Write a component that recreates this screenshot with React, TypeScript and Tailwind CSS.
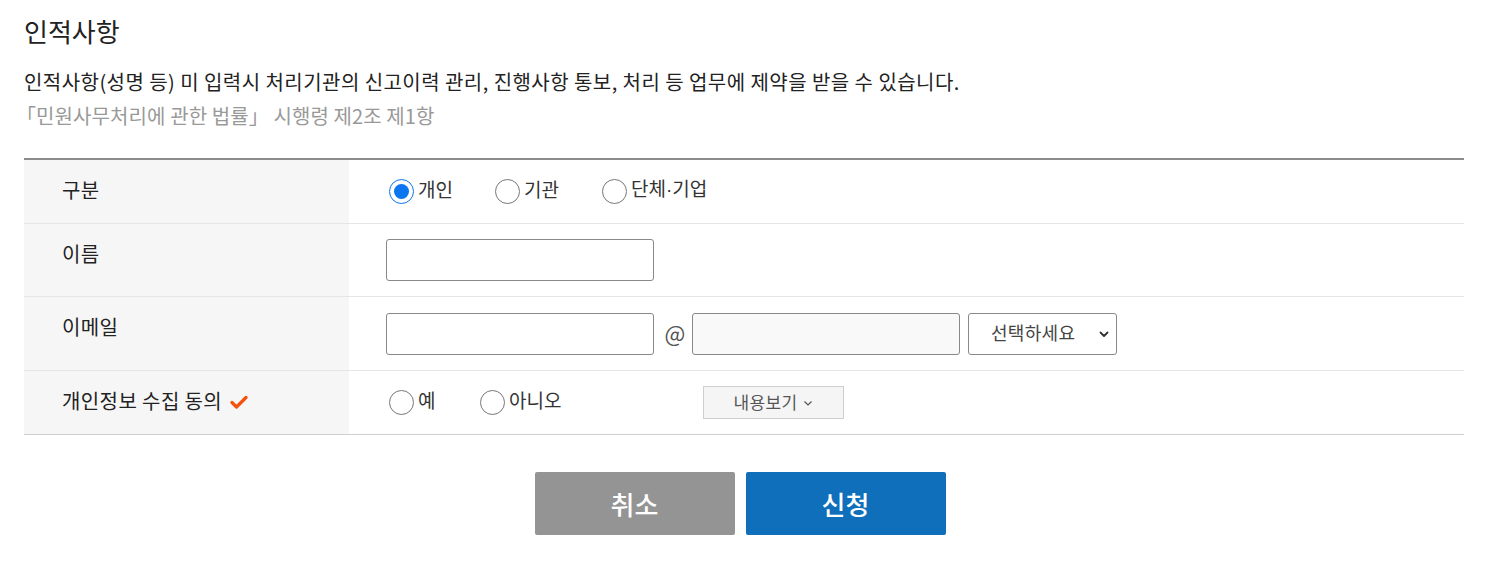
const FONT = { fontFamily: '"Noto Sans CJK KR", "Noto Sans", sans-serif' };

function Radio({ checked, label }: { checked?: boolean; label: React.ReactNode }) {
  return (
    <label className="flex items-center gap-[4px] text-[19px] text-[#333]">
      {checked ? (
        <span className="flex h-[25px] w-[25px] items-center justify-center rounded-full border-[1.5px] border-[#0b76ef] bg-white">
          <span className="h-[15px] w-[15px] rounded-full bg-[#0b76ef]" />
        </span>
      ) : (
        <span className="h-[25px] w-[25px] rounded-full border-[1.5px] border-[#777] bg-white" />
      )}
      <span className="-mt-[4px]">{label}</span>
    </label>
  );
}

function Row({ label, children, h, last }: { label: React.ReactNode; children: React.ReactNode; h: string; last?: boolean }) {
  return (
    <div className={`flex border-b ${last ? 'border-[#cfcfcf]' : 'border-[#e5e5e5]'} ${h}`}>
      <div className="flex w-[325px] shrink-0 items-start bg-[#f6f6f6] pl-[38px] pt-[15px] text-[20px] leading-[30px] tracking-[0.4px] text-[#222]">
        {label}
      </div>
      <div className="flex flex-1 items-center pl-[37px]">{children}</div>
    </div>
  );
}

export default function App() {
  return (
    <div className="min-h-screen bg-white" style={FONT}>
      <div className="ml-6 w-[1440px] pt-[14px]">
        <h2 className="text-[26px] leading-[34px] text-[#222]">인적사항</h2>
        <p className="mt-[17px] text-[20px] leading-[34px] tracking-[0.45px] text-[#222]">
          인적사항(성명 등) 미 입력시 처리기관의 신고이력 관리, 진행사항 통보, 처리 등 업무에 제약을 받을 수 있습니다.
        </p>
        <p className="-ml-[8px] text-[20px] leading-[34px] tracking-[0.1px] text-[#999]">
          「민원사무처리에 관한 법률」 시행령 제2조 제1항
        </p>

        <div className="mt-[25px] border-t-2 border-[#8c8c8c]">
          <Row label="구분" h="h-[64px]">
            <div className="ml-[3px] flex items-center">
              <div className="w-[106px]"><Radio checked label="개인" /></div>
              <div className="w-[107px]"><Radio label="기관" /></div>
              <Radio
                label={
                  <>
                    단체<span style={{ fontFamily: '"Liberation Sans", sans-serif' }}>·</span>기업
                  </>
                }
              />
            </div>
          </Row>
          <Row label="이름" h="h-[73px]">
            <input className="h-[42px] w-[268px] rounded-[3px] border border-[#888] bg-white" />
          </Row>
          <Row label="이메일" h="h-[74px]">
            <div className="flex items-center">
              <input className="h-[42px] w-[268px] rounded-[3px] border border-[#888] bg-white" />
              <span className="-mt-[3px] w-[38px] pl-[4px] text-center text-[22px] text-[#555]">@</span>
              <input className="h-[42px] w-[268px] rounded-[3px] border border-[#888] bg-[#f9f9f9]" />
              <div className="ml-[8px] flex h-[42px] w-[149px] items-center justify-between rounded-[3px] border border-[#888] bg-white pl-[22px] pr-[6px] text-[18px] tracking-[0.3px] text-[#444]">
                <span className="-mt-[2px]">선택하세요</span>
                <svg width="12" height="12" viewBox="0 0 12 12" fill="none">
                  <path d="M2.5 4.5 6 8l3.5-3.5" stroke="#333" strokeWidth="1.8" strokeLinecap="round" strokeLinejoin="round" />
                </svg>
              </div>
            </div>
          </Row>
          <Row
            last
            h="h-[64px]"
            label={
              <span className="flex items-center gap-[8px]">
                개인정보 수집 동의
                <svg width="18" height="14" viewBox="0 0 18 14" className="mt-[2px]">
                  <path d="M2 7.5 6.5 12 16 2.5" stroke="#f4500e" strokeWidth="3.2" fill="none" strokeLinecap="round" strokeLinejoin="round" />
                </svg>
              </span>
            }
          >
            <div className="ml-[3px] flex items-center">
              <div className="w-[91px]"><Radio label="예" /></div>
              <div className="w-[223px]"><Radio label="아니오" /></div>
              <button className="flex h-[33px] w-[141px] items-center justify-center gap-[6px] border border-[#cfcfcf] bg-[#f5f5f5] text-[17px] tracking-[0.3px] text-[#555]">
                <span className="-mt-[2px]">내용보기</span>
                <svg width="10" height="8" viewBox="0 0 10 8" fill="none">
                  <path d="M1.5 2.5 5 6l3.5-3.5" stroke="#555" strokeWidth="1.2" />
                </svg>
              </button>
            </div>
          </Row>
        </div>

        <div className="mt-[37px] flex justify-center gap-[11px] pr-[8px]">
          <button className="h-[63px] w-[200px] rounded-[2px] bg-[#949494] text-[26px] font-medium text-white">취소</button>
          <button className="h-[63px] w-[200px] rounded-[2px] bg-[#0f6fba] text-[26px] font-medium text-white">신청</button>
        </div>
      </div>
    </div>
  );
}
